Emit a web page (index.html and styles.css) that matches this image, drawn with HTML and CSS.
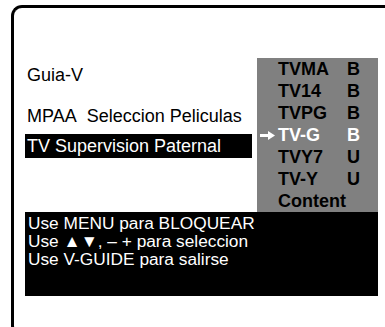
FILE: index.html
```html
<!DOCTYPE html>
<html lang="es">
<head>
    <meta charset="UTF-8">
    <meta name="viewport" content="width=device-width, initial-scale=1.0">
    <title>Supervision Paternal</title>
    <link rel="stylesheet" href="styles.css">
</head>
<body>
    <div class="frame">
        <div class="top">
            <div class="menu">
                <div class="item guia">Guia-V</div>
                <div class="item mpaa">MPAA&nbsp; Seleccion Peliculas</div>
                <div class="item selected">TV Supervision Paternal</div>
            </div>
            <div class="ratings">
                <div class="row"><span class="mark"></span><span class="label">TVMA</span><span class="val">B</span></div>
                <div class="row"><span class="mark"></span><span class="label">TV14</span><span class="val">B</span></div>
                <div class="row"><span class="mark"></span><span class="label">TVPG</span><span class="val">B</span></div>
                <div class="row current">
                    <span class="mark">
                        <svg width="15" height="9" viewBox="0 0 15 9">
                            <rect x="0" y="3" width="9" height="3" fill="#fff"/>
                            <polygon points="8,0 15,4.5 8,9" fill="#fff"/>
                        </svg>
                    </span>
                    <span class="label">TV-G</span><span class="val">B</span>
                </div>
                <div class="row"><span class="mark"></span><span class="label">TVY7</span><span class="val">U</span></div>
                <div class="row"><span class="mark"></span><span class="label">TV-Y</span><span class="val">U</span></div>
                <div class="row"><span class="mark"></span><span class="label">Content</span><span class="val"></span></div>
            </div>
        </div>
        <div class="help">
            <div>Use MENU para BLOQUEAR</div>
            <div>Use &#9650;&#9660;, &ndash; + para seleccion</div>
            <div>Use V-GUIDE para salirse</div>
        </div>
    </div>
</body>
</html>
```

FILE: styles.css
```css
html, body {
    margin: 0;
    background: #fff;
    overflow: hidden;
    font-family: "Liberation Sans", Arial, sans-serif;
}
.frame {
    margin: 5px 0 0 11px;
    width: 374px;
    height: 332px;
    border: 3px solid #000;
    border-right: none;
    border-radius: 11px 0 0 11px;
    padding: 50px 0 0 11px;
    box-sizing: border-box;
}
.top {
    display: flex;
    gap: 5px;
}
.menu {
    width: 227px;
    padding-top: 6px;
}
.item {
    font-size: 18px;
    line-height: 22px;
    color: #000;
}
.guia {
    padding-left: 2px;
    margin-bottom: 19px;
}
.mpaa {
    padding-left: 2px;
    margin-bottom: 7px;
}
.selected {
    background: #000;
    color: #fff;
    line-height: 24px;
    padding-left: 2px;
}
.ratings {
    width: 121px;
    background: #808080;
}
.row {
    display: flex;
    font-size: 18px;
    font-weight: bold;
    line-height: 22px;
    height: 22px;
    color: #000;
}
.mark {
    width: 21px;
    padding-left: 3px;
    box-sizing: border-box;
    display: flex;
    align-items: center;
}
.label {
    width: 69px;
}
.current {
    color: #fff;
}
.help {
    width: 353px;
    height: 84px;
    background: #000;
    color: #fff;
    font-size: 17.3px;
    line-height: 18px;
    padding: 2px 0 0 3px;
    box-sizing: border-box;
}
```
